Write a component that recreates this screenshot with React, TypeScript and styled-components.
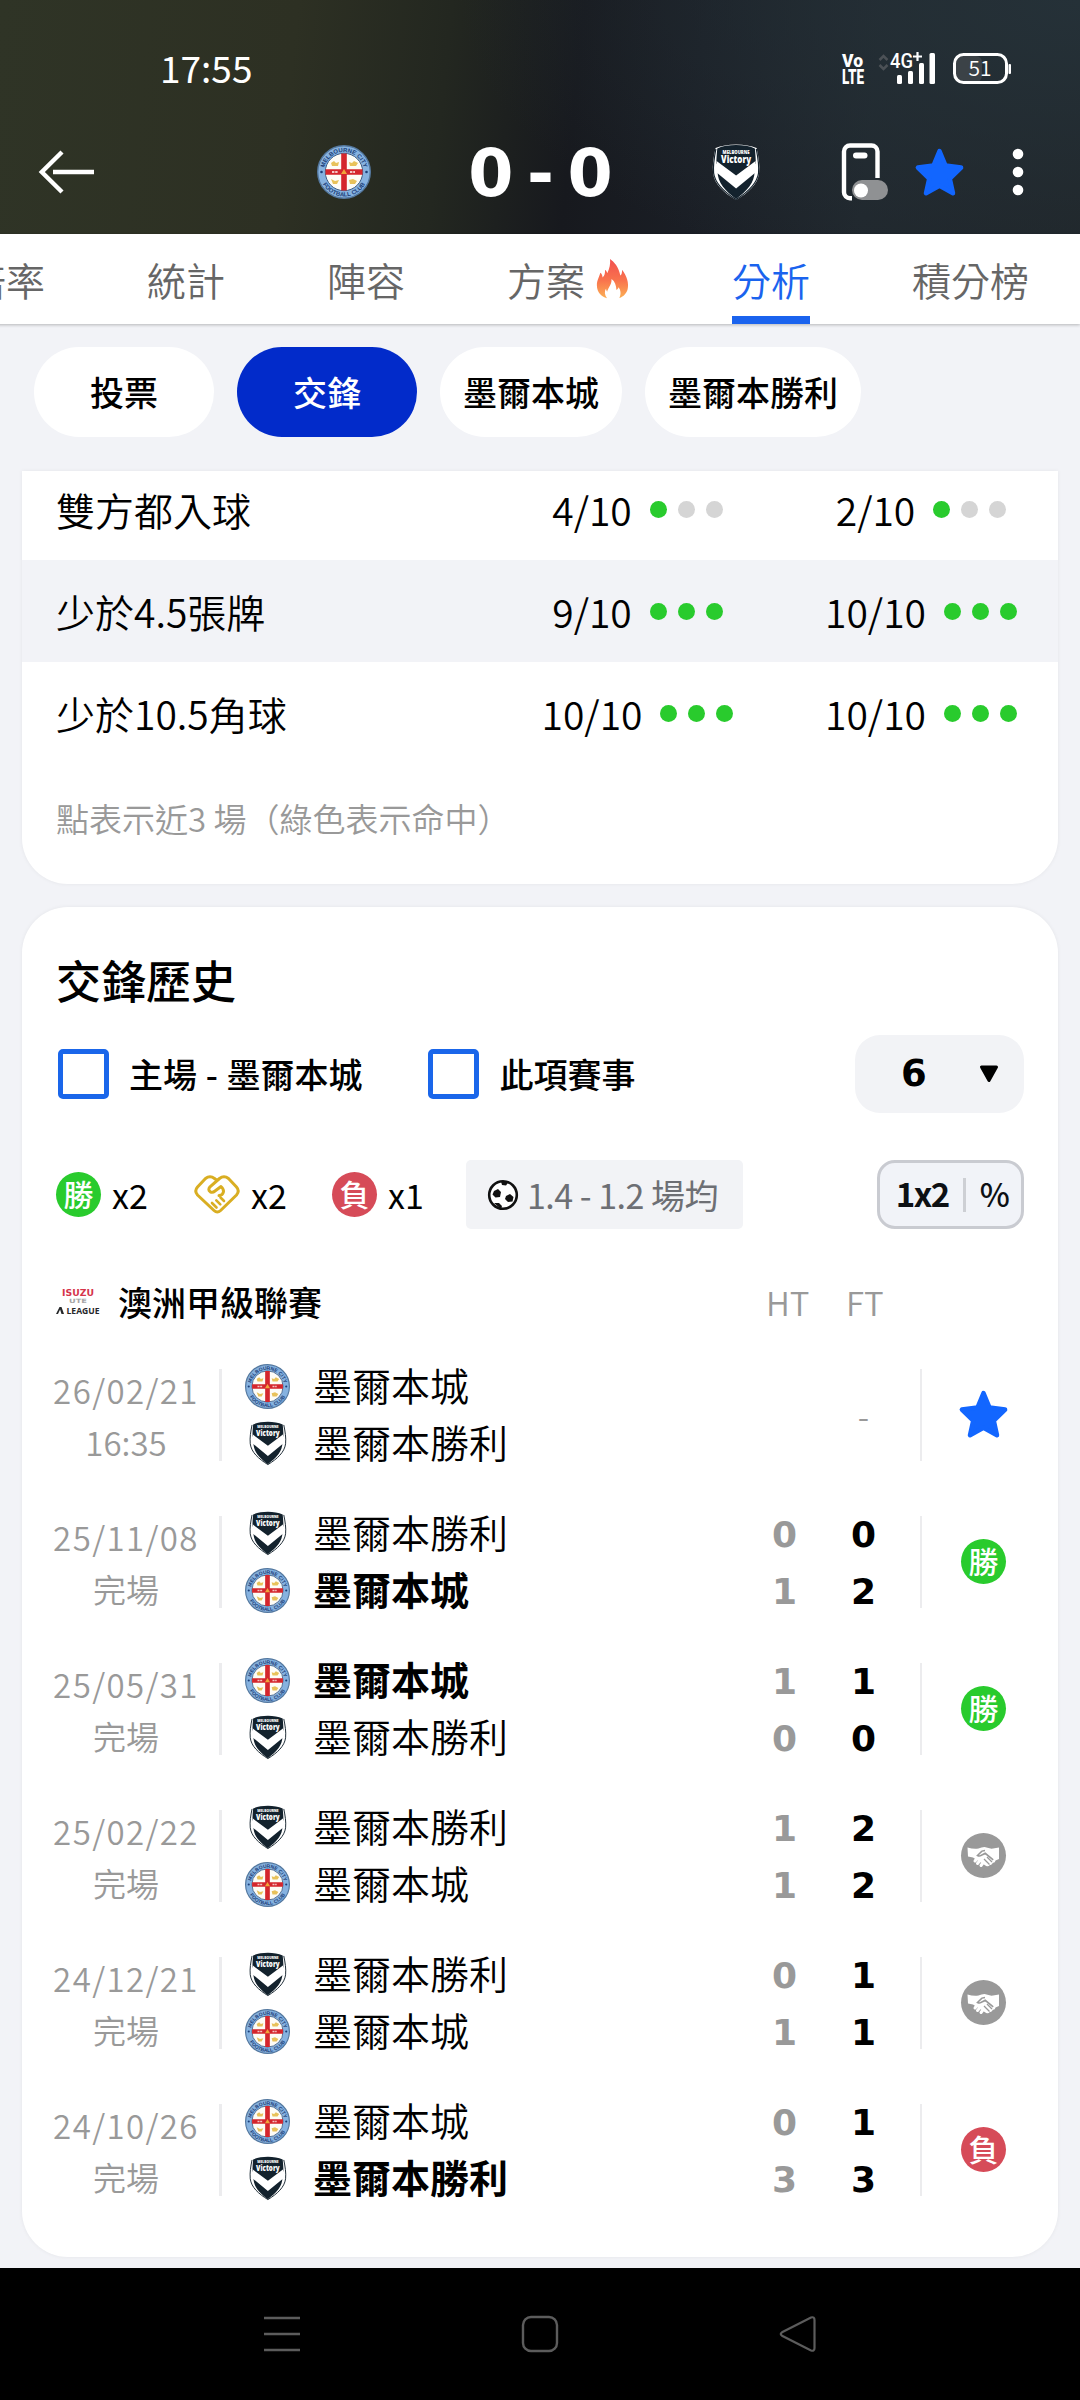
import styled, { createGlobalStyle } from "styled-components";

type Team = "city" | "victory";
type Result = "upcoming" | "win" | "draw" | "lose";

interface ISide {
    team: Team;
    ht?: number;
    ft?: number;
    winner?: boolean;
}

interface IMatch {
    date: string;
    status: string;
    sides: ISide[];
    result: Result;
}

const teamNames: Record<Team, string> = {
    city: "墨爾本城",
    victory: "墨爾本勝利",
};

const stats = [
    { label: "雙方都入球", values: [{ rate: "4/10", hits: 1 }, { rate: "2/10", hits: 1 }] },
    { label: "少於4.5張牌", values: [{ rate: "9/10", hits: 3 }, { rate: "10/10", hits: 3 }] },
    { label: "少於10.5角球", values: [{ rate: "10/10", hits: 3 }, { rate: "10/10", hits: 3 }] },
];

const matches: IMatch[] = [
    { date: "26/02/21", status: "16:35", sides: [{ team: "city" }, { team: "victory" }], result: "upcoming" },
    { date: "25/11/08", status: "完場", sides: [{ team: "victory", ht: 0, ft: 0 }, { team: "city", ht: 1, ft: 2, winner: true }], result: "win" },
    { date: "25/05/31", status: "完場", sides: [{ team: "city", ht: 1, ft: 1, winner: true }, { team: "victory", ht: 0, ft: 0 }], result: "win" },
    { date: "25/02/22", status: "完場", sides: [{ team: "victory", ht: 1, ft: 2 }, { team: "city", ht: 1, ft: 2 }], result: "draw" },
    { date: "24/12/21", status: "完場", sides: [{ team: "victory", ht: 0, ft: 1 }, { team: "city", ht: 1, ft: 1 }], result: "draw" },
    { date: "24/10/26", status: "完場", sides: [{ team: "city", ht: 0, ft: 1 }, { team: "victory", ht: 3, ft: 3, winner: true }], result: "lose" },
];

const GlobalStyle = createGlobalStyle`
    * {
        box-sizing: border-box;
    }
    body {
        margin: 0;
        background-color: #f2f3f7;
        font-family: "Noto Sans CJK TC", "Noto Sans", sans-serif;
        font-weight: 350;
        color: #000;
    }
    svg {
        display: block;
        flex-shrink: 0;
        overflow: visible;
    }
`;
const Screen = styled.div`
    width: 1080px;
    height: 2400px;
    display: flex;
    flex-direction: column;
    overflow: hidden;
    white-space: nowrap;
`;
const Header = styled.header`
    height: 234px;
    flex-shrink: 0;
    color: white;
    background: radial-gradient(ellipse 620px 300px at 100% 0%, #253138 0%, rgba(37, 49, 56, 0) 100%),
        linear-gradient(96deg, #2f3426 0%, #2d3023 27%, #232720 41%, #17191e 53%, #1a1e25 64%, #20272d 80%, #20262a 100%);
`;
const StatusBar = styled.div`
    height: 111px;
    padding: 27px 69px 0 160px;
    display: flex;
    align-items: center;
    justify-content: space-between;
`;
const Clock = styled.div`
    font-size: 37px;
    font-weight: 400;
    line-height: 40px;
    padding-bottom: 4px;
`;
const MatchBar = styled.div`
    height: 122px;
    display: grid;
    grid-template-columns: 278px 54px 341px 48px 1fr;
    align-items: center;
    padding-left: 39px;
`;
const Score = styled.div`
    padding: 3px 2px 0 0;
    text-align: center;
    font: bold 65px/60px "DejaVu Sans", sans-serif;
    word-spacing: -9px;
`;
const Actions = styled.div`
    padding-left: 81px;
    display: flex;
    align-items: center;
    gap: 27px;
`;
const Tabs = styled.nav`
    height: 90px;
    flex-shrink: 0;
    margin-left: -33px;
    display: flex;
    gap: 102px;
    background-color: white;
    box-shadow: 0 1px 3px rgba(0, 0, 0, 0.25);
    z-index: 1;
`;
const Tab = styled.div<{ $active?: boolean }>`
    height: 90px;
    display: flex;
    align-items: center;
    gap: 10px;
    padding-bottom: 1px;
    font-size: 39px;
    color: ${(props) => (props.$active ? "#1a63ee" : "#666")};
    box-shadow: ${(props) => (props.$active ? "inset 0 -8px #1a63ee" : "none")};
`;
const Chips = styled.div`
    height: 147px;
    flex-shrink: 0;
    padding: 23px 34px 0;
    display: flex;
    gap: 23px;
`;
const Chip = styled.div<{ $active?: boolean }>`
    height: 90px;
    min-width: 180px;
    padding: 0 23px 1px;
    border-radius: 45px;
    display: flex;
    align-items: center;
    justify-content: center;
    font-size: 34px;
    font-weight: 500;
    color: ${(props) => (props.$active ? "white" : "#000")};
    background-color: ${(props) => (props.$active ? "#022bca" : "white")};
`;
const Card = styled.section`
    width: 1036px;
    margin: 0 auto;
    flex-shrink: 0;
    overflow: hidden;
    background-color: white;
    box-shadow: 0 0 4px rgba(0, 0, 0, 0.06);
`;
/* scrolled under the chips, so the first row is cut and only the lower corners are round */
const StatsCard = styled(Card)`
    height: 413px;
    border-radius: 0 0 46px 46px;
    display: flex;
    flex-direction: column;
    justify-content: flex-end;
`;
const StatRow = styled.div`
    height: 102px;
    flex-shrink: 0;
    padding-left: 34px;
    display: grid;
    grid-template-columns: 1fr 293px 274px;
    align-items: center;
    font-size: 39px;
    line-height: 50px;
    &:nth-child(2) {
        background-color: #f2f3f7;
    }
`;
const StatValue = styled.div`
    display: flex;
    align-items: center;
    justify-content: center;
    gap: 18px;
`;
const Dots = styled.div`
    display: flex;
    gap: 11px;
`;
const Dot = styled.i<{ $hit: boolean }>`
    width: 17px;
    height: 17px;
    border-radius: 50%;
    background-color: ${(props) => (props.$hit ? "#29cb2d" : "#d5d5d5")};
`;
const Note = styled.p`
    height: 120px;
    flex-shrink: 0;
    margin: 0;
    padding: 30px 34px 0;
    font-size: 33px;
    line-height: 48px;
    color: #999;
`;
const HistoryCard = styled(Card)`
    height: 1350px;
    margin-top: 23px;
    padding: 43px 34px 0;
    border-radius: 46px;
`;
const Title = styled.h2`
    margin: 0;
    font-size: 45px;
    font-weight: 500;
    line-height: 60px;
`;
const Filters = styled.div`
    height: 78px;
    margin-top: 25px;
    display: flex;
    align-items: center;
    font-size: 34px;
    font-weight: 500;
    word-spacing: 1px;
`;
const Filter = styled.label`
    display: flex;
    align-items: center;
    gap: 20px;
    margin: 0 64px 0 2px;
    line-height: 46px;
`;
const Box = styled.span`
    width: 51px;
    height: 50px;
    border: 5px solid #1a66ea;
    border-radius: 5px;
`;
const Select = styled.div`
    width: 169px;
    height: 78px;
    margin-left: auto;
    padding: 0 25px 0 46px;
    border-radius: 25px;
    display: flex;
    align-items: center;
    justify-content: space-between;
    background-color: #f2f3f6;
    font: bold 37px/50px "DejaVu Sans", sans-serif;
`;
const Summary = styled.div`
    height: 69px;
    margin-top: 47px;
    display: flex;
    align-items: center;
    font-size: 34px;
    font-weight: 400;
`;
const Count = styled.div`
    width: 138px;
    display: flex;
    align-items: center;
    gap: 11px;
`;
const Badge = styled.span<{ $color: string }>`
    width: 45px;
    height: 45px;
    flex-shrink: 0;
    border-radius: 50%;
    display: flex;
    align-items: center;
    justify-content: center;
    background-color: ${(props) => props.$color};
    color: white;
    font-size: 30px;
    font-weight: 500;
    line-height: 41px;
    padding-bottom: 3px;
`;
const Average = styled.div`
    width: 277px;
    height: 69px;
    margin-left: -4px;
    padding: 0 21px;
    border-radius: 5px;
    display: flex;
    align-items: center;
    gap: 8px;
    background-color: #f2f3f6;
    color: #6d6f74;
    letter-spacing: -0.5px;
`;
const Toggle = styled.div`
    width: 147px;
    height: 69px;
    margin-left: auto;
    padding: 0 0 3px 3px;
    border: 3px solid #c9cbd1;
    border-radius: 18px;
    display: flex;
    align-items: center;
    justify-content: center;
    gap: 14px;
    background-color: #f1f3f8;
    font-size: 33px;
    font-weight: 700;
    letter-spacing: -1.5px;
    color: #0d1014;
`;
const ToggleLine = styled.i`
    width: 3px;
    height: 34px;
    margin-top: 3px;
    background-color: #cdcfd4;
`;
const Percent = styled.span`
    font-size: 32px;
    font-weight: 500;
`;
const LeagueRow = styled.div`
    height: 50px;
    margin: 48px 0 14px;
    display: grid;
    grid-template-columns: 62px 1fr 80px 178px;
    align-items: center;
    font-size: 34px;
    font-weight: 500;
    line-height: 50px;
`;
const Period = styled.span`
    font-size: 33px;
    font-weight: 350;
    color: #999;
`;
const MatchRow = styled.div`
    height: 147px;
    margin: 0 -3px 0 -5px;
    display: grid;
    grid-template-columns: 150px 18px 3px 23px 1fr 79px 79px 17px 2px 105px;
    align-items: center;
`;
const When = styled.div`
    padding-top: 2px;
    text-align: center;
    font-size: 33px;
    line-height: 52px;
    color: #999;
`;
const DateText = styled.div`
    letter-spacing: 1.4px;
`;
const Divider = styled.i<{ $column: number }>`
    grid-column: ${(props) => props.$column};
    height: 92px;
    background-color: #ececee;
`;
const Teams = styled.div`
    grid-column: 5;
`;
const TeamLine = styled.div<{ $bold?: boolean }>`
    height: 57px;
    display: grid;
    grid-template-columns: 68px 1fr;
    align-items: center;
    font-size: 39px;
    line-height: 52px;
    font-weight: ${(props) => (props.$bold ? 700 : 350)};
`;
const TeamName = styled.span`
    padding-bottom: 4px;
`;
const CrestBox = styled.span`
    width: 45px;
    display: flex;
    justify-content: center;
`;
const Scores = styled.div<{ $muted?: boolean }>`
    padding-top: 3px;
    text-align: center;
    font: bold 36px/57px "DejaVu Sans", sans-serif;
    color: ${(props) => (props.$muted ? "#999" : "#000")};
`;
const NoScore = styled.div`
    text-align: center;
    font-size: 33px;
    color: #999;
`;
const Outcome = styled.div`
    grid-column: 10;
    padding-left: 18px;
    display: flex;
    justify-content: center;
`;
const NavBar = styled.footer`
    height: 132px;
    margin-top: 11px;
    flex-shrink: 0;
    display: flex;
    align-items: center;
    justify-content: center;
    gap: 218px;
    background-color: #000;
`;

function StatusIcons() {
    return (
        <svg width="171" height="36" viewBox="0 0 171 36" fill="white">
            <g fontFamily="Roboto, sans-serif" fontWeight="900">
                <text x="2" y="15.500" fontSize="18.500" textLength="21" lengthAdjust="spacingAndGlyphs">Vo</text>
                <text x="2" y="33" fontSize="20.500" textLength="22" lengthAdjust="spacingAndGlyphs">LTE</text>
            </g>
            <path d="M39.500 9l4-4 4 4M39.500 14l4 4 4-4" fill="none" stroke="#4c5156" strokeWidth="2.500" />
            <text x="50" y="17" fontSize="20" fontFamily="Roboto, sans-serif" fontWeight="500" textLength="23" lengthAdjust="spacingAndGlyphs">4G</text>
            <path d="M73 5.500h9M77.500 1v9" stroke="white" strokeWidth="2.200" />
            <rect x="57" y="24" width="5" height="9" rx="1.500" />
            <rect x="68" y="20" width="5" height="13" rx="1.500" />
            <rect x="79" y="12" width="5" height="21" rx="1.500" />
            <rect x="89.500" y="2" width="5.500" height="31" rx="1.500" />
            <rect x="115" y="5" width="27" height="26" rx="6" fill="#3b4247" />
            <rect x="114.500" y="3.500" width="52" height="28" rx="9" fill="none" stroke="white" strokeWidth="3" />
            <rect x="168.500" y="13" width="2.500" height="10" rx="1" />
            <text x="140" y="25" fontSize="21" fontFamily="Noto Sans CJK TC, sans-serif" textAnchor="middle">51</text>
        </svg>
    );
}

function CityCrest({ size }: { size: number }) {
    return (
        <svg width={size} height={size} viewBox="0 0 54 54">
            <defs>
                <path id="ring-top" d="M7 27a20 20 0 0 1 40 0" />
                <path id="ring-bottom" d="M2.500 27a24.500 24.500 0 0 0 49 0" />
            </defs>
            <circle cx="27" cy="27" r="26.300" fill="#86b2e0" stroke="#54789f" strokeWidth="1.400" />
            <circle cx="27" cy="27" r="18.700" fill="#fdfcf6" stroke="#3f5d84" strokeWidth="1" />
            <g fill="#1c3f78" fontFamily="Liberation Sans, sans-serif" fontWeight="bold" fontSize="6">
                <text><textPath href="#ring-top" startOffset="50%" textAnchor="middle">MELBOURNE CITY</textPath></text>
                <text><textPath href="#ring-bottom" startOffset="50%" textAnchor="middle">FOOTBALL CLUB</textPath></text>
            </g>
            <circle cx="4.500" cy="27" r="1.300" fill="#1c3f78" />
            <circle cx="49.500" cy="27" r="1.300" fill="#1c3f78" />
            <path d="M27 8.500v37M8.500 27h37" stroke="#d4262d" strokeWidth="5.600" />
            <path d="M14 18l3-2 2 2 3-1-1 4h-6zM32 17l3 1 2-2 4 2-2 3h-6zM14 34l4 2 4-1-2 4h-4zM32 35l4-1 4 2-2 3h-5z" fill="#e8c25a" />
            <path d="M24 29l3-5 3 5z" fill="#f0a53a" />
            <path d="M15 27h6M33 27h5" stroke="#f4c6c4" strokeWidth="1.800" strokeDasharray="2.400 0.800" />
        </svg>
    );
}

function VictoryCrest({ size }: { size: number }) {
    return (
        <svg width={size * 0.86} height={size} viewBox="0 0 48 56">
            <path d="M24 .5c8 0 15 1.200 20.500 3.500 2 9 3.500 17 2.500 25C46 40 36 49 24 56 12 49 2 40 1 29 0 21 1.500 13 3.500 4 9 1.700 16 .5 24 .5z" fill="#fff" />
            <path d="M3.800 5C2 14 .8 21 1.500 29 3 40 12 48 24 55.500 36 48 45 40 46.500 29 47.200 21 46 14 44.200 5" fill="none" stroke="#13222d" strokeWidth="1.200" />
            <path d="M24 1c7 0 13.500 1 18.800 3.400 .5 5.500 1 10 .9 15L24 34 4.300 19.500C4.200 15 4.700 10 5.200 4.400 10.500 2 17 1 24 1z" fill="#13222d" />
            <path d="M5.500 27L24 43.500 42.500 27c.2 12-8 20-18.500 28C13.500 47 5.300 39 5.500 27z" fill="#13222d" />
            <path d="M4.500 17L24 31.500l19.500-14.500v11.500L24 44.500 4.500 28.500z" fill="#fff" />
            <g fill="#fff" fontFamily="Open Sans, sans-serif" fontWeight="800" textAnchor="middle">
                <text x="24" y="9.500" fontSize="5" textLength="27" lengthAdjust="spacingAndGlyphs">MELBOURNE</text>
                <text x="24" y="18.500" fontSize="11" textLength="30" lengthAdjust="spacingAndGlyphs">Victory</text>
            </g>
        </svg>
    );
}

function PhoneIcon() {
    return (
        <svg width="47" height="58" viewBox="0 0 47 58">
            <path d="M11 55.200H9a6 6 0 0 1-6-6V8.500a6 6 0 0 1 6-6h21.500a6 6 0 0 1 6 6V35" fill="none" stroke="white" strokeWidth="4.400" />
            <rect x="12" y="9.500" width="14.500" height="6" rx="3" fill="white" />
            <rect x="11" y="37" width="36" height="20" rx="10" fill="#8f9193" />
            <circle cx="20" cy="47.500" r="7" fill="white" />
        </svg>
    );
}

function StarIcon() {
    return (
        <svg width="49" height="49" viewBox="0 0 49 49">
            <path
                d="M24.500 3l6 14.600 15.600 2-11.300 11.100L38 45.200l-13.500-7.500L11 45.200l3.200-14.500L2.900 19.600l15.600-2z"
                fill="#1266ff"
                stroke="#1266ff"
                strokeWidth="4.500"
                strokeLinejoin="round"
            />
        </svg>
    );
}

function FlameIcon() {
    return (
        <svg width="35" height="41" viewBox="1 0 33 42">
            <defs>
                <linearGradient id="flame" x1="0" y1="0" x2="0" y2="1">
                    <stop offset="0" stopColor="#f24f50" />
                    <stop offset="0.550" stopColor="#f9744d" />
                    <stop offset="1" stopColor="#fbb055" />
                </linearGradient>
            </defs>
            <path
                d="M15 1c4 3 9 8 10.500 17 1.300-1 2-3 1.700-6 5 6 7.300 14 5.800 20-1 4-4 7.500-8.500 9 2-4 1.500-8-.8-11-.5 1.500-1.200 2.300-2.200 2.700C21.300 28 20 24 16.500 21.500c.3 4-1.200 6-2.500 8.500-1 2-1.700 3-1.900 4.500-.8-.8-1.200-2-1.200-3.200-2 3-1.500 6.700 1 10C6 39.500 1.500 35 1.500 28c0-5.500 2.500-8.500 3.500-13 1.500 1 2.200 2.800 2.300 5C9.500 18 10 15.500 9.800 12c1.300.8 2 2 2.300 3.500C14.500 11 15.500 6 15 1z"
                fill="url(#flame)"
            />
        </svg>
    );
}

function BallIcon() {
    return (
        <svg width="32" height="32" viewBox="0 0 32 32">
            <circle cx="16" cy="16" r="13.800" fill="white" stroke="#111" strokeWidth="2.600" />
            <path d="M7 12l4-2 3 3-1 5-4.500.5-3-3zM19 17l4-2 3.500 3-1 4.500-4.500.5-3-3zM14 2.500h8l-3 4-4-.5zM7 24l5 0 3 3-1 3z" fill="#111" />
        </svg>
    );
}

/* two hands that close into a heart, used for the draw counter */
function HandshakeOutline() {
    return (
        <svg width="46" height="39" viewBox="0 0 46 39" fill="none" stroke="#d9ae22" strokeWidth="3" strokeLinecap="round" strokeLinejoin="round">
            <path d="M22.500 5.200L20.500 3.500q-4.500-3.500-9 0L3.500 12q-3.500 4 0 8L20 35.500q3.300 3 6.600 0L42.500 20q3.500-4 0-8l-8-8.500q-4.500-3.500-9 0L16 11.800q-2.500 3 .3 5 2.300 1.200 4.700-.8l6-4.500q2.800 2.500 2.500 5.300-.8 3.700-4.500 3.700" />
            <path d="M26.500 22.500l3.500 3.500M22.300 25.300l4 4M18 28l4.500 4.500" strokeWidth="2.600" />
        </svg>
    );
}

function HandshakeSolid() {
    return (
        <svg width="45" height="45" viewBox="0 0 45 45">
            <circle cx="22.500" cy="22.500" r="22.500" fill="#999" />
            <path
                d="M6.500 14.500q6 1.800 11 1 3-1.500 6-1.500l7 1.800 7.500-1.300v11.500l-3.500 1.500q-.3 2.500-2.700 2.300-.6 2.500-3 2.100-1.300 2.300-3.600 1L12 24.500l-5-1z"
                fill="white"
            />
            <path d="M24 17.500q-3.500.2-5 2.500l-2.500 2.500q2.500 1.200 5-.8l2.700-1.400 8 6.500" fill="none" stroke="#999" strokeWidth="1.600" />
            <path d="M23 26l5.500 5.500M26 24l5 5" stroke="#999" strokeWidth="1.300" />
            <path d="M15.500 26l-1.500 2M18.500 28l-2 2.500M21.500 30.500l-1.500 2" stroke="white" strokeWidth="3" strokeLinecap="round" />
        </svg>
    );
}

function LeagueLogo() {
    return (
        <svg width="46" height="28" viewBox="0 0 46 28" fontWeight="bold">
            <text x="6" y="8" fontSize="8.500" fill="#d5344b" fontFamily="DejaVu Sans, sans-serif" textLength="32" lengthAdjust="spacingAndGlyphs">ISUZU</text>
            <text x="13" y="14.500" fontSize="6" fill="#a5a5a5" fontFamily="DejaVu Sans, sans-serif" textLength="18" lengthAdjust="spacingAndGlyphs">UTE</text>
            <path d="M0 26l3.500-7h2l2.500 7H5.500l-1.400-4.500L2 26z" fill="#26282a" />
            <text x="10.500" y="26" fontSize="9.500" fill="#26282a" fontFamily="Open Sans, sans-serif" textLength="33" lengthAdjust="spacingAndGlyphs">LEAGUE</text>
        </svg>
    );
}

function Crest({ team, size = 45 }: { team: Team; size?: number }) {
    return team === "city" ? <CityCrest size={size} /> : <VictoryCrest size={size - 1} />;
}

function ResultIcon({ result }: { result: Result }) {
    if (result === "upcoming") return <StarIcon />;
    if (result === "draw") return <HandshakeSolid />;
    return result === "win" ? <Badge $color="#29cb2d">勝</Badge> : <Badge $color="#d64b58">負</Badge>;
}

function MatchItem({ match }: { match: IMatch }) {
    return (
        <MatchRow>
            <When>
                <DateText>{match.date}</DateText>
                <div>{match.status}</div>
            </When>
            <Divider $column={3} />
            <Teams>
                {match.sides.map((side) => (
                    <TeamLine key={side.team} $bold={side.winner}>
                        <CrestBox><Crest team={side.team} /></CrestBox>
                        <TeamName>{teamNames[side.team]}</TeamName>
                    </TeamLine>
                ))}
            </Teams>
            <Scores $muted>
                {match.sides.map((side) => <div key={side.team}>{side.ht}</div>)}
            </Scores>
            {match.result === "upcoming" ? (
                <NoScore>-</NoScore>
            ) : (
                <Scores>
                    {match.sides.map((side) => <div key={side.team}>{side.ft}</div>)}
                </Scores>
            )}
            <Divider $column={9} />
            <Outcome><ResultIcon result={match.result} /></Outcome>
        </MatchRow>
    );
}

function App() {
    return (
        <Screen>
            <GlobalStyle />
            <Header>
                <StatusBar>
                    <Clock>17:55</Clock>
                    <StatusIcons />
                </StatusBar>
                <MatchBar>
                    <svg width="56" height="44" viewBox="0 0 56 44" fill="none" stroke="white" strokeWidth="4.400">
                        <path d="M23 2L2.800 22 23 42M14 22h41" />
                    </svg>
                    <Crest team="city" size={54} />
                    <Score>0 - 0</Score>
                    <Crest team="victory" size={57} />
                    <Actions>
                        <PhoneIcon />
                        <StarIcon />
                        <svg width="58" height="50" viewBox="0 0 58 50" fill="white">
                            <circle cx="27" cy="7" r="5.300" />
                            <circle cx="27" cy="25" r="5.300" />
                            <circle cx="27" cy="43" r="5.300" />
                        </svg>
                    </Actions>
                </MatchBar>
            </Header>
            <Tabs>
                <Tab>倍率</Tab>
                <Tab>統計</Tab>
                <Tab>陣容</Tab>
                <Tab>方案<FlameIcon /></Tab>
                <Tab $active>分析</Tab>
                <Tab>積分榜</Tab>
            </Tabs>
            <Chips>
                <Chip>投票</Chip>
                <Chip $active>交鋒</Chip>
                <Chip>墨爾本城</Chip>
                <Chip>墨爾本勝利</Chip>
            </Chips>
            <StatsCard>
                {stats.map((stat) => (
                    <StatRow key={stat.label}>
                        <span>{stat.label}</span>
                        {stat.values.map((value, i) => (
                            <StatValue key={i}>
                                {value.rate}
                                <Dots>
                                    {[0, 1, 2].map((n) => <Dot key={n} $hit={n < value.hits} />)}
                                </Dots>
                            </StatValue>
                        ))}
                    </StatRow>
                ))}
                <Note>點表示近3 場（綠色表示命中）</Note>
            </StatsCard>
            <HistoryCard>
                <Title>交鋒歷史</Title>
                <Filters>
                    <Filter><Box />主場 - 墨爾本城</Filter>
                    <Filter><Box />此項賽事</Filter>
                    <Select>
                        6
                        <svg width="20" height="18" viewBox="0 0 20 18">
                            <path d="M2.500 2h15L10 15.500z" stroke="#000" strokeWidth="3" strokeLinejoin="round" />
                        </svg>
                    </Select>
                </Filters>
                <Summary>
                    <Count><Badge $color="#29cb2d">勝</Badge>x2</Count>
                    <Count><HandshakeOutline />x2</Count>
                    <Count><Badge $color="#d64b58">負</Badge>x1</Count>
                    <Average><BallIcon />1.4 - 1.2 場均</Average>
                    <Toggle>1x2<ToggleLine /><Percent>%</Percent></Toggle>
                </Summary>
                <LeagueRow>
                    <LeagueLogo />
                    <span>澳洲甲級聯賽</span>
                    <Period>HT</Period>
                    <Period>FT</Period>
                </LeagueRow>
                {matches.map((match) => <MatchItem key={match.date} match={match} />)}
            </HistoryCard>
            <NavBar>
                <svg width="40" height="40" viewBox="0 0 40 40" stroke="#5c5c5c" strokeWidth="2.600">
                    <path d="M2 4h36M2 20h36M2 36h36" />
                </svg>
                <svg width="40" height="40" viewBox="0 0 40 40" fill="none" stroke="#5c5c5c" strokeWidth="2.400">
                    <rect x="3" y="3" width="34" height="34" rx="8" />
                </svg>
                <svg width="40" height="40" viewBox="0 0 40 40" fill="none" stroke="#5c5c5c" strokeWidth="2.200">
                    <path d="M4 18.300L33 3.500q3.500-1 3.500 2.500v28q0 3.500-3.500 2.500L4 21.700q-2.500-1.700 0-3.400z" />
                </svg>
            </NavBar>
        </Screen>
    );
}

export default App;
